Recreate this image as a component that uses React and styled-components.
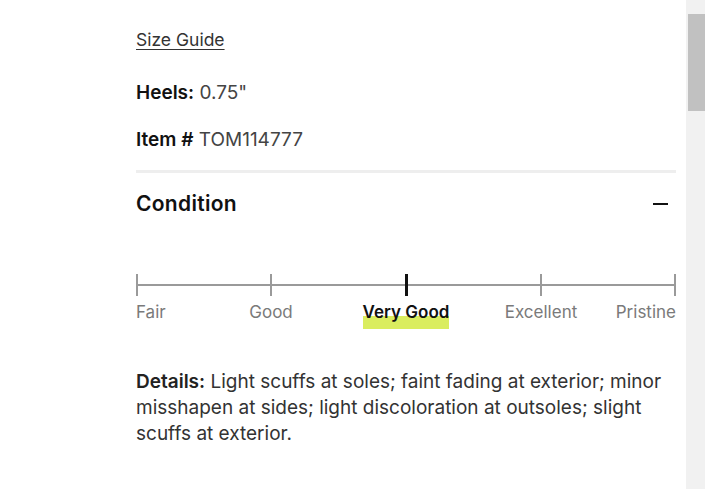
import React from "react";
import styled, { createGlobalStyle } from "styled-components";

const GlobalStyle = createGlobalStyle`
  html, body {
    margin: 0;
    padding: 0;
    background: #fff;
  }
  body {
    font-family: Inter, "Liberation Sans", Arial, sans-serif;
    color: #222;
  }
`;

const levels = ["Fair", "Good", "Very Good", "Excellent", "Pristine"];
const current = 2;

function App() {
  return (
    <Page>
      <GlobalStyle />
      <Main>
        <SizeLink href="#">Size Guide</SizeLink>
        <Spec>
          <b>Heels:</b> 0.75"
        </Spec>
        <Spec $last>
          <b>Item #</b> TOM114777
        </Spec>

        <Section>
          <SectionHeader>
            <SectionTitle>Condition</SectionTitle>
            <Minus />
          </SectionHeader>

          <Track>
            {levels.map((l, i) => (
              <Tick key={l} $active={i === current} />
            ))}
          </Track>
          <Labels>
            {levels.map((l, i) => (
              <LabelSlot
                key={l}
                $align={i === 0 ? "flex-start" : i === levels.length - 1 ? "flex-end" : "center"}
              >
                {i === current ? <ActiveLabel>{l}</ActiveLabel> : <Label>{l}</Label>}
              </LabelSlot>
            ))}
          </Labels>

          <Details>
            <b>Details:</b> Light scuffs at soles; faint fading at exterior; minor
            misshapen at sides; light discoloration at outsoles; slight scuffs at
            exterior.
          </Details>
        </Section>
      </Main>
      <Scrollbar>
        <Thumb />
      </Scrollbar>
    </Page>
  );
}

const Page = styled.div`
  display: flex;
  height: 100vh;
  overflow: hidden;
`;

const Main = styled.div`
  flex: 1;
  display: flex;
  flex-direction: column;
  align-items: flex-start;
  padding: 27px 10px 0 136px;
  font-size: 19px;
  line-height: 26px;
`;

const SizeLink = styled.a`
  color: #333;
  font-size: 17.5px;
  text-decoration: underline;
  text-underline-offset: 3px;
  text-decoration-thickness: 1px;
`;

const Spec = styled.div`
  margin-top: ${(p) => (p.$last ? "21px" : "27px")};
  color: #444;
  padding-bottom: ${(p) => (p.$last ? "17px" : "0")};

  b {
    color: #111;
    font-weight: 600;
  }
`;

const Section = styled.div`
  align-self: stretch;
  border-top: 3px solid #eeeeee;
`;

const SectionHeader = styled.div`
  display: flex;
  align-items: center;
  justify-content: space-between;
  padding-top: 18px;
`;

const SectionTitle = styled.h3`
  margin: 0;
  font-size: 21px;
  line-height: 25px;
  letter-spacing: 0.3px;
  font-weight: 600;
  color: #111;
`;

const Minus = styled.span`
  width: 15px;
  height: 2px;
  background: #111;
  margin-right: 8px;
`;

const Track = styled.div`
  display: flex;
  justify-content: space-between;
  align-items: stretch;
  height: 22px;
  margin-top: 58px;
  background: linear-gradient(#9a9a9a, #9a9a9a) center / 100% 2px no-repeat;
`;

const Tick = styled.span`
  width: ${(p) => (p.$active ? "3px" : "2px")};
  background: ${(p) => (p.$active ? "#111" : "#9a9a9a")};
`;

const Labels = styled.div`
  display: flex;
  justify-content: space-between;
  margin-top: 6px;
  font-size: 17px;
  line-height: 20px;
`;

const LabelSlot = styled.div`
  width: 0;
  display: flex;
  justify-content: ${(p) => p.$align};
  white-space: nowrap;
`;

const Label = styled.span`
  color: #7a7a7a;
`;

const ActiveLabel = styled.span`
  font-weight: 600;
  color: #111;
  padding-bottom: 7px;
  background: linear-gradient(to bottom, transparent 14px, #daed5f 14px);
`;

const Details = styled.p`
  margin: 40px 0 0;
  color: #333;
  font-size: 19px;
  line-height: 26px;

  b {
    color: #222;
    font-weight: 600;
  }
`;

const Scrollbar = styled.div`
  width: 19px;
  flex-shrink: 0;
  background: #f1f1f1;
  display: flex;
  justify-content: flex-end;
  align-items: flex-start;
  padding-top: 14px;
  box-sizing: border-box;
`;

const Thumb = styled.div`
  width: 17px;
  height: 97px;
  background: #c1c1c1;
`;

export default App;
